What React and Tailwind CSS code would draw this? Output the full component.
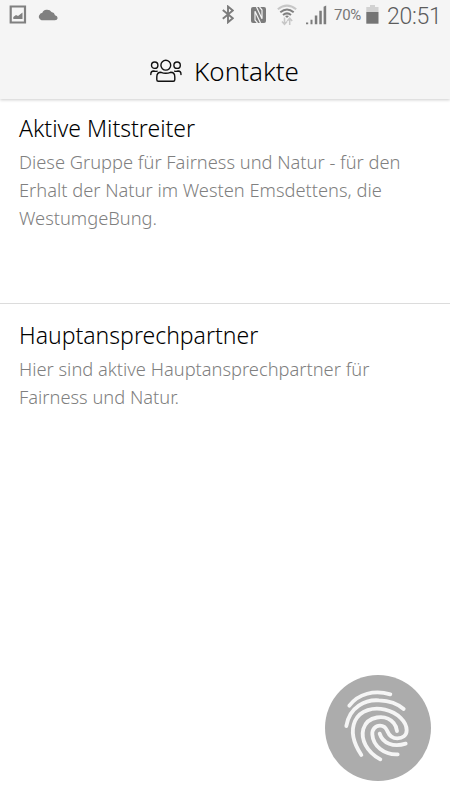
import React from 'react';

function PictureIcon() {
  return (
    <svg className="h-[19px] w-[18px]" viewBox="0 0 18 19" fill="none">
      <path d="M1.7 1.5H16V17.5H1.7Z" stroke="#808080" strokeWidth="2.2" />
      <path d="M4.3 14V12L7 10L9 11L13.5 7.5V14Z" fill="#808080" />
    </svg>
  );
}

function CloudIcon() {
  return (
    <svg className="h-3 w-5" viewBox="0 0 20 12" fill="#808080">
      <path d="M3.5 11.2A3.5 3.5 0 0 1 1.8 5.4Q2.5 4.1 4.2 4.1A5 4.5 0 0 1 13.5 3.1Q16.5 3.5 17 6.2Q19.8 7 19.6 9.2Q19.3 11.2 17 11.2Z" />
    </svg>
  );
}

function BluetoothIcon() {
  return (
    <svg className="h-[19px] w-3" viewBox="0 0 12 19" fill="none" stroke="#7c7c7c" strokeWidth="1.9">
      <path d="M.8 5L10.8 13.3L6 17.3V1.5L10.8 5.5L.8 13.8" />
    </svg>
  );
}

function NfcIcon() {
  return (
    <svg className="h-4 w-[15px]" viewBox="0 0 15 16">
      <rect width="15" height="16" rx="2" fill="#7c7c7c" />
      <path d="M6.5 16L4 13V4.2L9.5 16M8.5 0L11 3V11.8L5.5 0" fill="none" stroke="#f5f5f5" strokeWidth="1.2" />
    </svg>
  );
}

function WifiIcon() {
  return (
    <svg className="h-[22px] w-5" viewBox="0 0 20 22" fill="none" strokeWidth="2">
      <path d="M.8 5.3Q10-2 19.2 5.3" stroke="#c7c7c7" />
      <path d="M3.3 8.3Q10 2.7 16.7 8.3M6 11Q10 7.7 14 11" stroke="#808080" />
      <path d="M8 12Q10 11 12 12L10 14Z" fill="#808080" />
      <path d="M7.5 13.5V20M5 17.5L7.5 20.3L10 17.5M12.7 21V14.5M10.2 17L12.7 14.2L15.2 17" stroke="#c7c7c7" strokeWidth="1.5" />
    </svg>
  );
}

function SignalIcon() {
  return (
    <svg className="h-5 w-[21px]" viewBox="0 0 21 20" fill="#7c7c7c">
      <path d="M0 17.5H2.2V19.3H0ZM4.5 14.7H6.5V19.3H4.5ZM8.8 10.5H11.3V19.3H8.8ZM13.3 5.7H15.8V19.3H13.3ZM17.6 1.7L20.2 .6V19.3H17.6Z" />
    </svg>
  );
}

function BatteryIcon() {
  return (
    <svg className="h-[19px] w-[13px]" viewBox="0 0 13 19">
      <path d="M.3 2H4V0H9V2H12.5V7H.3Z" fill="#d2d2d2" />
      <path d="M.3 7H12.5V18.7H.3Z" fill="#757575" />
    </svg>
  );
}

function PeopleIcon() {
  return (
    <svg className="h-6 w-8" viewBox="0 0 32 24" fill="none" stroke="#111" strokeWidth="1.4" strokeLinecap="round">
      <circle cx="15.8" cy="6.2" r="4.9" />
      <circle cx="4.7" cy="6.2" r="3.2" />
      <circle cx="27.1" cy="6.2" r="3.2" />
      <path d="M6.8 20.8V18Q6.8 13.3 11 13.3Q15.8 15.2 20.6 13.3Q24.8 13.3 24.8 18V20.8Q24.8 22.3 23.3 22.3H8.3Q6.8 22.3 6.8 20.8Z" />
      <path d="M.8 15.5Q.8 12 3.6 12Q5.7 12.6 7.2 12.1M31 15.5Q31 12 28.2 12Q26.1 12.6 24.6 12.1" />
    </svg>
  );
}

function FingerprintIcon() {
  return (
    <svg className="size-[106px]" viewBox="30 30 318 318" fill="none" stroke="#f5f5f5" strokeWidth="11.5" strokeLinecap="round" strokeLinejoin="round">
      <path d="M103 122C130 86 178 74 226 88" />
      <path d="M94 183C103 125 152 103 192 106C222 107 248 116 266 132" />
      <path d="M139 270C114 232 108 195 120 168C136 134 176 126 210 134C248 143 275 170 275 196C275 212 262 220 247 220C226 220 220 205 217 198C212 187 205 182 195 182C181 182 171 193 172 208C174 243 208 270 248 268" />
      <path d="M196 283C154 260 137 222 145 192C157 152 212 146 236 174Q244 183 246 198" />
      <path d="M194 206C203 235 235 248 272 236" />
    </svg>
  );
}

function StatusBar() {
  return (
    <div className="flex h-8 items-start pl-[9px] pr-[7px]">
      <div className="mt-[5px]"><PictureIcon /></div>
      <div className="ml-[11px] mt-[9px]"><CloudIcon /></div>
      <div className="ml-auto flex items-start">
        <div className="mr-[17px] mt-[5px]"><BluetoothIcon /></div>
        <div className="mr-[11px] mt-[7px]"><NfcIcon /></div>
        <div className="mr-[9px] mt-1"><WifiIcon /></div>
        <div className="mr-[7px] mt-[5px]"><SignalIcon /></div>
        <span className="mt-[5px] w-[32px] whitespace-nowrap font-['Roboto',sans-serif] text-[15px] leading-5 tracking-[-0.3px] text-[#777]">70%</span>
        <div className="mt-[5px]"><BatteryIcon /></div>
        <span className="ml-2 mt-[3px] w-[56px] whitespace-nowrap font-['Roboto',sans-serif] text-[23px] font-light leading-7 tracking-[-0.3px] text-[#5c5c5c]">20:51</span>
      </div>
    </div>
  );
}

const groups = [
  { title: 'Aktive Mitstreiter', lines: ['Diese Gruppe für Fairness und Natur - für den', 'Erhalt der Natur im Westen Emsdettens, die', 'WestumgeBung.'] },
  { title: 'Hauptansprechpartner', lines: ['Hier sind aktive Hauptansprechpartner für', 'Fairness und Natur.'] },
];

export default function App() {
  return (
    <div className="relative h-[800px] w-[450px] overflow-hidden bg-white font-['Noto_Sans',sans-serif] text-black">
      <header className="h-[99px] bg-[#f5f5f5] shadow-[0_1px_3px_rgba(0,0,0,0.2)]">
        <StatusBar />
        <div className="flex items-center gap-3 pl-[150px] pt-5">
          <PeopleIcon />
          <h1 className="text-[26px] font-light leading-[38px]">Kontakte</h1>
        </div>
      </header>
      <main>
        {groups.map((group) => (
          <section key={group.title} className="h-[204px] px-[19px] pt-[13px] last:border-t last:border-[#dcdcdc] last:pt-[15px]">
            <h2 className="whitespace-nowrap text-[23px] font-light leading-8">{group.title}</h2>
            <p className="mt-1 whitespace-nowrap text-[18.3px] font-light leading-7 text-[#808080]">
              {group.lines.map((line) => <span key={line} className="block">{line}</span>)}
            </p>
          </section>
        ))}
      </main>
      <button aria-label="Fingerabdruck" className="absolute left-[325px] top-[675px] size-[106px] rounded-full bg-[#acacac]">
        <FingerprintIcon />
      </button>
    </div>
  );
}
